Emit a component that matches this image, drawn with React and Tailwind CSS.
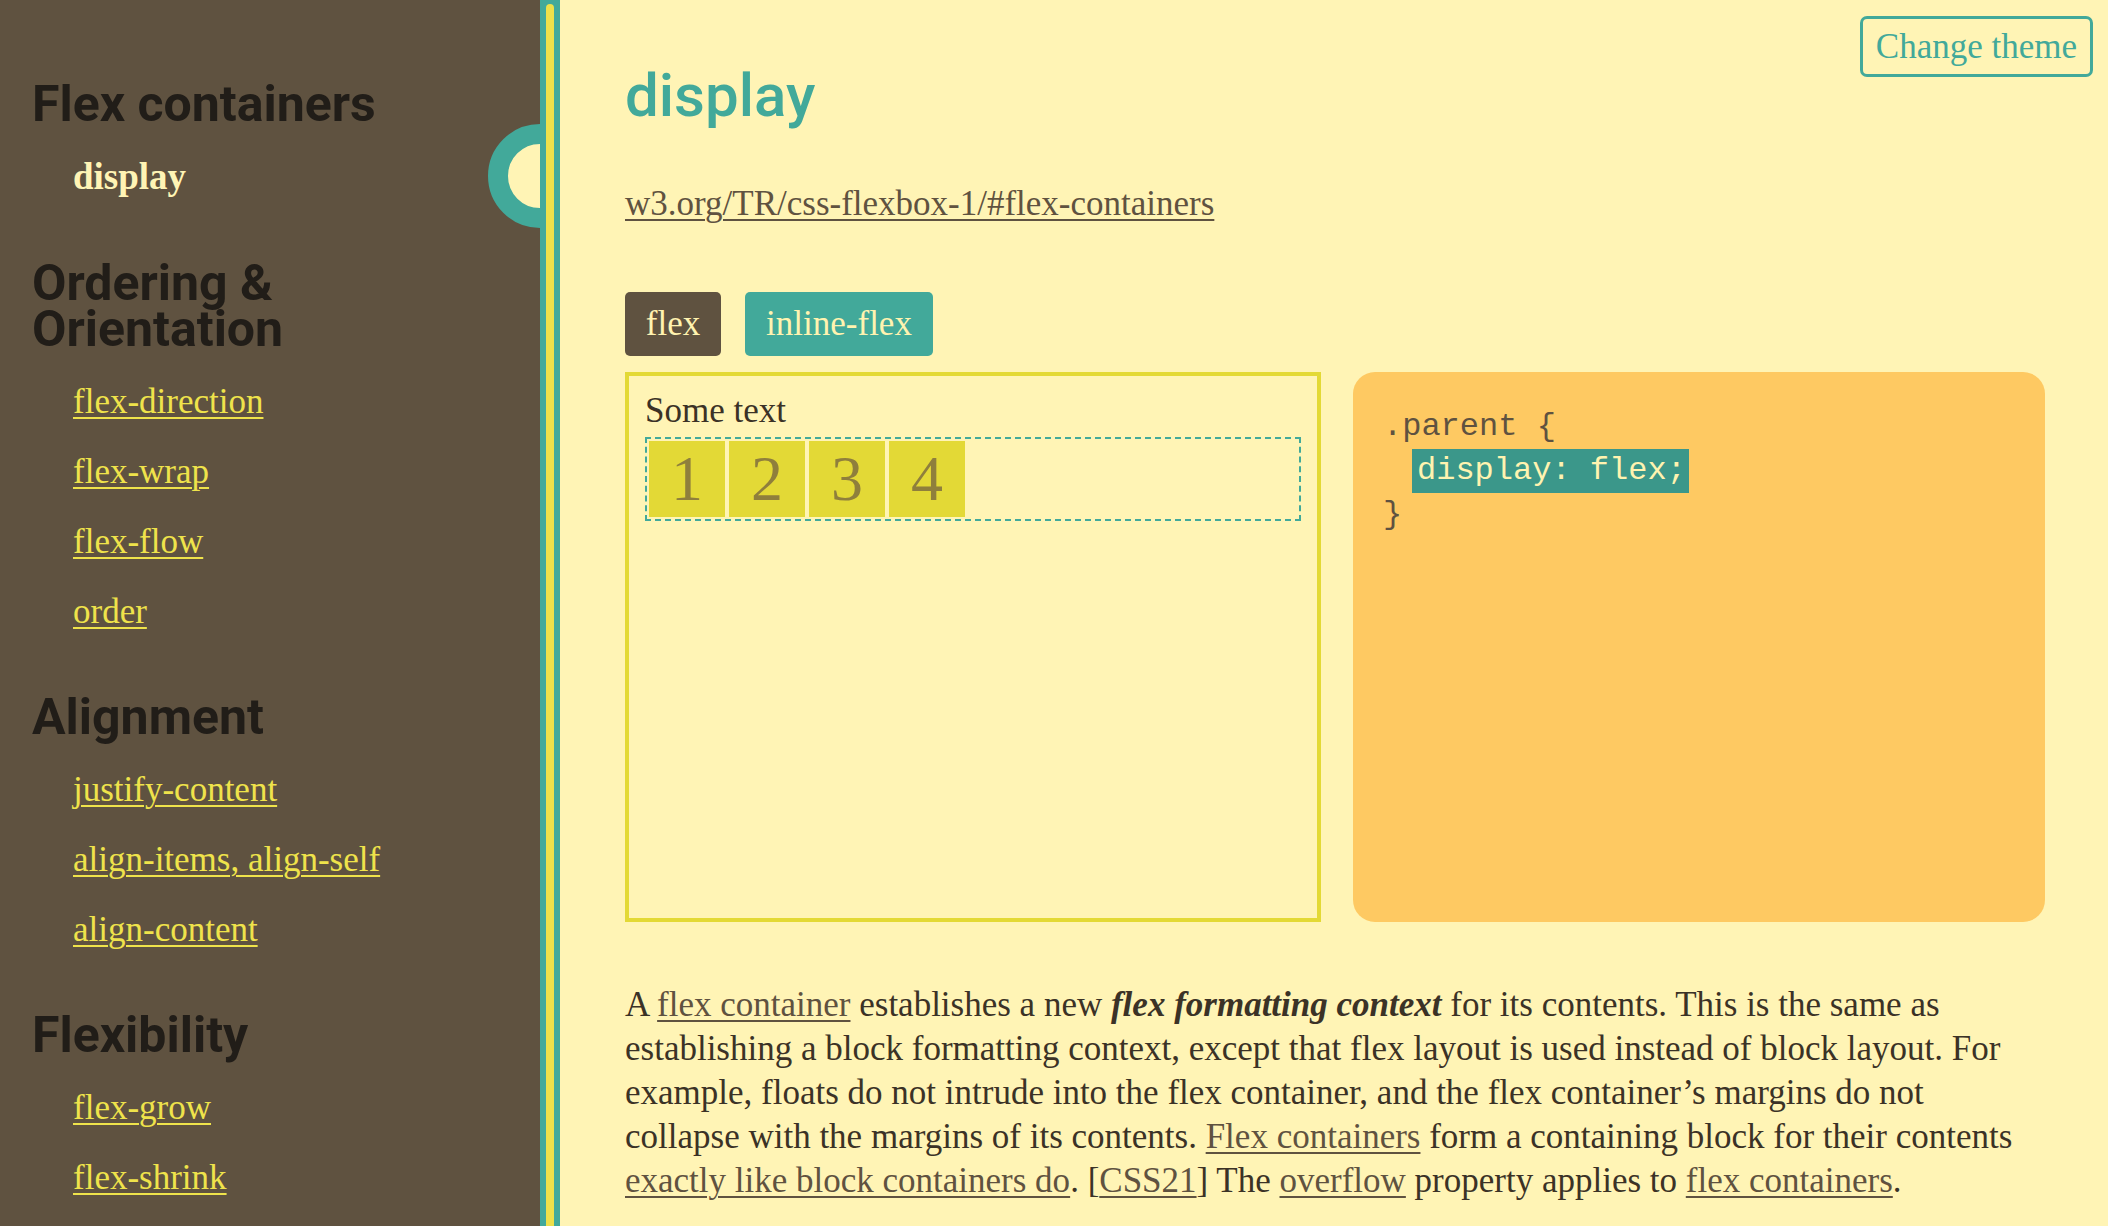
import React from 'react';

const sections = [
  { title: 'Flex containers', items: ['display'] },
  { title: 'Ordering & Orientation', items: ['flex-direction', 'flex-wrap', 'flex-flow', 'order'] },
  { title: 'Alignment', items: ['justify-content', 'align-items, align-self', 'align-content'] },
  { title: 'Flexibility', items: ['flex-grow', 'flex-shrink'] },
];

const Sidebar = () => (
  <aside className="relative w-[540px] shrink-0 overflow-hidden bg-[#5F5240] pl-[32px] pr-[60px] pt-[81px]">
    {/* current-page marker */}
    <div className="absolute left-[488px] top-[124px] h-[104px] w-[104px] rounded-full border-[20px] border-[#42A99A] bg-[#FFF4B5]" />

    {sections.map((section, i) => (
      <div key={section.title} className={i === 0 ? '' : 'mt-[47px]'}>
        <h2 className="mb-[15px] font-['Roboto',sans-serif] text-[50px] font-bold leading-[46px] text-[#211D18]">
          {section.title}
        </h2>
        <ul>
          {section.items.map((item) => (
            <li key={item} className="py-[13px] pl-[41px] text-[35px] leading-[44px]">
              {item === 'display' ? (
                <span className="text-[37px] font-bold text-[#FFF4B5]">{item}</span>
              ) : (
                <a href="#" className="text-[#EFE34B] underline decoration-[2px] underline-offset-[4px]">
                  {item}
                </a>
              )}
            </li>
          ))}
        </ul>
      </div>
    ))}
  </aside>
);

const Stripe = () => (
  <div className="relative z-10 w-[20px] shrink-0 bg-[#42A99A] px-[6px] pt-[4px]">
    <div className="h-full rounded-t-full bg-[#EDE04A]" />
  </div>
);

const Link = ({ children }) => (
  <a href="#" className="text-[#5F5240] underline decoration-[2px] underline-offset-[4px]">
    {children}
  </a>
);

const App = () => {
  return (
    <div className="flex h-[1226px] w-full overflow-hidden bg-[#FFF4B5] font-['Liberation_Serif',serif] text-[#3B3226]">
      <Sidebar />
      <Stripe />

      <main className="relative min-w-0 flex-1 pl-[65px] pr-[63px] pt-[66px]">
        <button className="absolute right-[15px] top-[16px] flex h-[61px] items-center rounded-[7px] border-[3px] border-[#42A99A] px-[13px] text-[35px] leading-[44px] text-[#42A99A]">
          Change theme
        </button>

        <h1 className="font-['Roboto',sans-serif] text-[60px] font-medium leading-[60px] text-[#42A99A]">
          display
        </h1>

        <p className="mt-[56px] text-[35px] leading-[44px]">
          <Link>w3.org/TR/css-flexbox-1/#flex-containers</Link>
        </p>

        <div className="mt-[66px] flex gap-[24px]">
          <button className="flex h-[64px] w-[96px] items-center justify-center rounded-[5px] bg-[#5F5240] text-[35px] leading-[44px] text-[#FFF3B0]">
            flex
          </button>
          <button className="flex h-[64px] w-[188px] items-center justify-center rounded-[5px] bg-[#42A99A] text-[35px] leading-[44px] text-[#FFF3B0]">
            inline-flex
          </button>
        </div>

        <div className="mt-[16px] flex gap-[32px]">
          {/* live demo */}
          <div className="h-[550px] w-[696px] shrink-0 border-[4px] border-[#E3D935] px-[16px] pt-[13px]">
            <div className="text-[35px] leading-[44px] text-[#3B3226]">Some text</div>
            <div className="mt-[4px] flex border-[2px] border-dashed border-[#42A99A]">
              {['1', '2', '3', '4'].map((n) => (
                <div
                  key={n}
                  className="m-[2px] flex h-[76px] w-[76px] items-center justify-center bg-[#E3D936] text-[64px] leading-none text-[#8F7F3C]"
                >
                  {n}
                </div>
              ))}
            </div>
          </div>

          {/* css code */}
          <div className="h-[550px] flex-1 rounded-[22px] bg-[#FEC962] px-[30px] pt-[33px] font-['Liberation_Mono',monospace] text-[32px] leading-[44px] text-[#5F5240]">
            <div>.parent {'{'}</div>
            <div>
              <span className="ml-[29px] inline-block bg-[#3B978A] pl-[5px] pr-[3px] text-[#FFF3B0]">
                display: flex;
              </span>
            </div>
            <div>{'}'}</div>
          </div>
        </div>

        <p className="mt-[61px] text-[35px] leading-[44px]">
          A <Link>flex container</Link> establishes a new{' '}
          <b>
            <i>flex formatting context</i>
          </b>{' '}
          for its contents. This is the same as establishing a block formatting context, except that flex
          layout is used instead of block layout. For example, floats do not intrude into the flex
          container, and the flex container’s margins do not collapse with the margins of its contents.{' '}
          <Link>Flex containers</Link> form a containing block for their contents{' '}
          <Link>exactly like block containers do</Link>. [<Link>CSS21</Link>] The <Link>overflow</Link>{' '}
          property applies to <Link>flex containers</Link>.
        </p>
      </main>
    </div>
  );
};

export default App;
